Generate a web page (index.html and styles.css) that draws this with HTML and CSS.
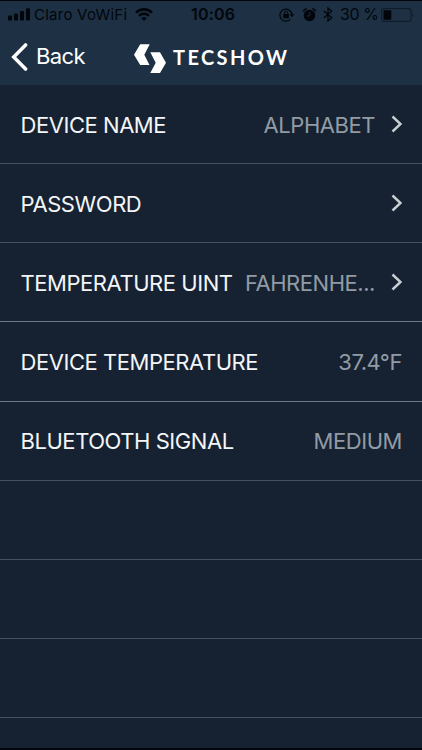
FILE: index.html
```
<!DOCTYPE html>
<html lang="en">
<head>
<meta charset="utf-8">
<title>TECSHOW</title>
<link rel="stylesheet" href="styles.css">
</head>
<body>
<div class="screen">
  <header class="header">
    <div class="status">
      <div class="status-left">
        <svg class="signal" width="22" height="13" viewBox="0 0 22 13"><rect x="0" y="7.5" width="4" height="5" rx="1"/><rect x="6" y="5.5" width="4" height="7" rx="1"/><rect x="12" y="3" width="4" height="9.5" rx="1"/><rect x="18" y="0.3" width="4" height="12.2" rx="1"/></svg>
        <span class="carrier">Claro VoWiFi</span>
        <svg class="wifi" width="18" height="13" viewBox="0 0 18 13"><path d="M1 4.6C5.5.3 12.500.3 17 4.600" fill="none" stroke="currentColor" stroke-width="2.600"/><path d="M4 7.800C6.800 5.100 11.200 5.100 14 7.800" fill="none" stroke="currentColor" stroke-width="2.400"/><path d="M6.200 10.100Q9 7.700 11.800 10.100L9 12.900Z"/></svg>
      </div>
      <span class="clock">10:06</span>
      <div class="status-right">
        <svg width="16" height="14" viewBox="0 0 16 14"><path d="M11.300 11.300A6 6 0 1 1 12.900 6.500" fill="none" stroke="currentColor" stroke-width="1.200"/><path d="M10.600 6.300H15.200L12.900 9.200Z"/><rect x="4.300" y="6" width="5.600" height="4.300" rx=".5"/><path d="M5.400 6V4.900a1.700 1.700 0 0 1 3.400 0V6" fill="none" stroke="currentColor"/></svg>
        <svg class="alarm" width="13" height="14" viewBox="0 0 13 14"><circle cx="6.500" cy="7.500" r="5.700"/><path d="M.8 3.600A2.300 2.300 0 0 1 3.800 1.200M9.200 1.200a2.300 2.300 0 0 1 3 2.400" fill="none" stroke="currentColor" stroke-width="1.500"/><path d="M6.800 4v4H3.800" fill="none" stroke="#1d3044" stroke-width=".9"/></svg>
        <svg class="bluetooth" width="10" height="15" viewBox="0 0 10 15"><path d="M.8 4L8.700 10.700L5 14V1L8.700 4.300L.8 11" fill="none" stroke="currentColor" stroke-width="1.300"/></svg>
        <span class="percent">30 %</span>
        <svg class="battery" width="34" height="14" viewBox="0 0 34 14"><rect x=".6" y=".6" width="29.500" height="12.800" rx="2.500" fill="none" stroke="#111c29" stroke-width="1.100"/><rect x="2.500" y="2.300" width="7.800" height="9.500" rx="1"/><path d="M31.500 5q2 2 0 4z" fill="#111c29"/></svg>
      </div>
    </div>
    <nav class="nav">
      <a class="back">
        <svg width="17" height="28" viewBox="0 0 17 28"><path d="M14.600 1.900L2.700 14L14.600 26.100" fill="none" stroke="currentColor" stroke-width="3.500" stroke-linecap="round" stroke-linejoin="miter"/></svg>
        <span class="back-label">Back</span>
      </a>
      <div class="brand">
        <svg width="32" height="29" viewBox="0 0 32 29"><path d="M0 10.700L6.200.3H15.700L10.300 10.700L15.500 21H6.200ZM16.300 8.300H26L32 18.700L26 29H16.300L21.700 18.700Z"/></svg>
        <span class="brand-name">TECSHOW</span>
      </div>
    </nav>
  </header>
  <main class="list">
    <div class="row"><span class="label">DEVICE NAME</span><span class="value">ALPHABET</span><svg class="chevron" width="12" height="18" viewBox="0 0 12 18"><path d="M1.500 1.500L9.500 9L1.500 16.500"/></svg></div>
    <div class="row"><span class="label">PASSWORD</span><svg class="chevron" width="12" height="18" viewBox="0 0 12 18"><path d="M1.500 1.500L9.500 9L1.500 16.500"/></svg></div>
    <div class="row bright"><span class="label">TEMPERATURE UINT</span><span class="value">FAHRENHE...</span><svg class="chevron" width="12" height="18" viewBox="0 0 12 18"><path d="M1.500 1.500L9.500 9L1.500 16.500"/></svg></div>
    <div class="row bright"><span class="label">DEVICE TEMPERATURE</span><span class="value">37.4°F</span></div>
    <div class="row"><span class="label">BLUETOOTH SIGNAL</span><span class="value">MEDIUM</span></div>
    <div class="row"></div>
    <div class="row"></div>
    <div class="row"></div>
  </main>
</div>
</body>
</html>
```
FILE: styles.css
```
* { box-sizing: border-box; }
body { margin: 0; background: #000; font-family: Inter, "Liberation Sans", sans-serif; }
svg { display: block; flex: none; fill: currentColor; }
.screen { height: 750px; background: #162231; border-top: 1px solid #02060c; border-bottom: 2px solid #02050a; overflow: hidden; }
.header { height: 84px; background: #1d3044; }
.status { height: 27px; display: grid; grid-template-columns: 191px 1fr auto; align-items: center; padding: 0 7px 0 0; color: #02060b; font-size: 15px; line-height: 27px; white-space: nowrap; }
.status-left, .status-right { display: flex; align-items: center; }
.status-left { padding-left: 8px; }
.carrier { margin-left: 4px; width: 101px; letter-spacing: .25px; }
.clock { font-size: 16px; font-weight: 600; letter-spacing: .2px; }
.alarm { margin-left: 8px; }
.bluetooth { margin-left: 7px; }
.percent { margin-left: 7px; width: 41px; font-size: 16px; letter-spacing: -.4px; }
.nav { height: 57px; display: flex; align-items: center; color: #fff; }
.back { width: 134px; padding-left: 11px; display: flex; align-items: center; gap: 8px; }
.back-label { font-size: 22px; line-height: 28px; letter-spacing: -.6px; margin-top: -1px; }
.brand { display: flex; align-items: center; gap: 7px; padding-top: 4px; }
.brand-name { font-family: Lato, sans-serif; font-weight: 700; font-size: 20px; line-height: 24px; letter-spacing: 2.4px; margin-top: -4px; }
.list { padding-top: .2px; }
.row { height: 79.1px; display: flex; align-items: center; padding: 1px 20px 0 20.5px; border-bottom: 1px solid #465160; white-space: nowrap; }
.bright { border-color: #707985; }
.label, .value { font-size: 22px; line-height: 30px; letter-spacing: -.45px; }
.label { color: #f3f5f7; }
.value { margin-left: auto; color: #929ba5; }
.chevron { margin: -2px -1px 0 auto; fill: none; stroke: #c9ced3; stroke-width: 2.4; }
.value + .chevron { margin-left: 16px; }
```
